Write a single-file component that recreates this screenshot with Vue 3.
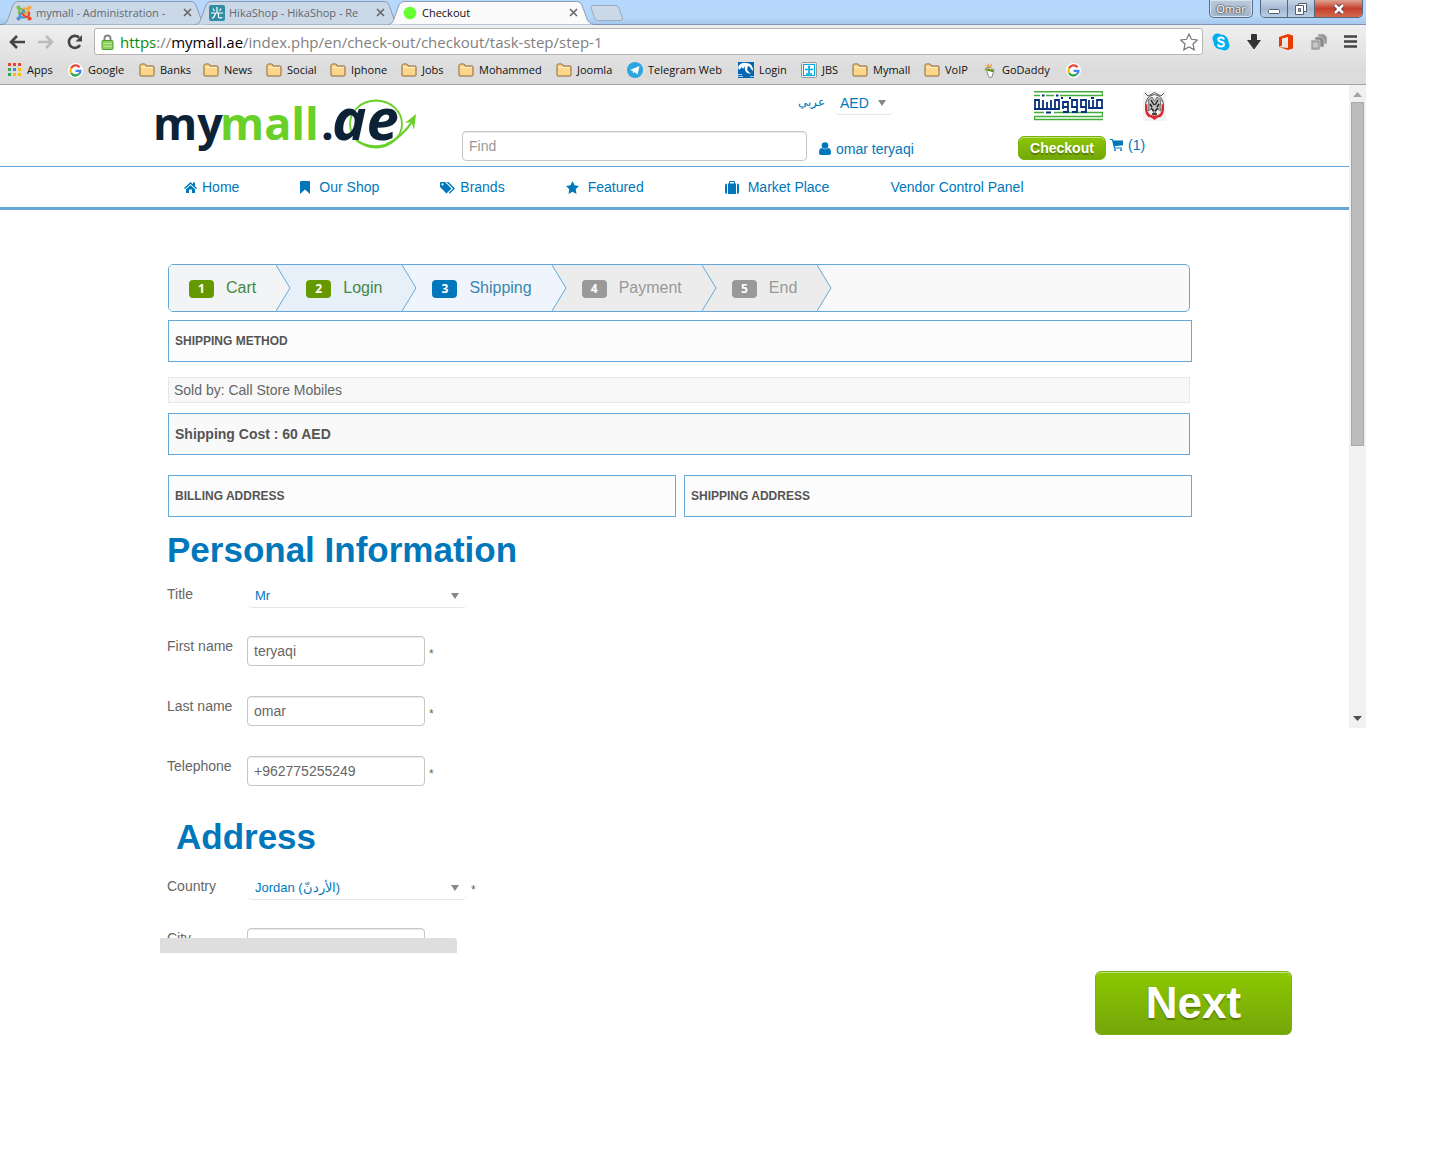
<template>
  <div class="screen">
    <header class="chrome">
      <div class="tab-strip">
        <div class="tabs">
          <button v-for="tab in tabs" :key="tab.title" type="button" class="tab" :class="{ active: tab.active }">
            <svg class="tab-shape" viewBox="0 0 206 25" preserveAspectRatio="none">
              <path d="M0 24.500C5 24 5 21 7 16L11 5Q12.500 1.500 16 1.500H189Q192.500 1.500 194 5L199 19Q201 24 206 24.500" />
            </svg>
            <svg v-if="tab.icon === 'joomla'" class="tab-icon" viewBox="0 0 16 16" fill="none" stroke-width="2.200" stroke-linecap="round">
              <path d="M3 8.500V6.500Q3 4 5.500 4L10 8.500" stroke="#7ac143" />
              <path d="M7.500 3.500H9.500Q12.500 4 12 6.500L8 10.500" stroke="#f9a541" />
              <path d="M13 7.500V9.500Q12 12.500 9.500 12L5.500 8" stroke="#f44321" />
              <path d="M8.500 12.500H6.500Q3 12 4 9.500L8 5.500" stroke="#5091cd" />
              <circle cx="2.500" cy="2.500" r="1.300" fill="#7ac143" stroke="#7ac143" stroke-width="1.500" />
              <circle cx="13.500" cy="2.500" r="1.300" fill="#f9a541" stroke="#f9a541" stroke-width="1.500" />
              <circle cx="13.500" cy="13.500" r="1.300" fill="#f44321" stroke="#f44321" stroke-width="1.500" />
              <circle cx="2.500" cy="13.500" r="1.300" fill="#5091cd" stroke="#5091cd" stroke-width="1.500" />
            </svg>
            <svg v-else-if="tab.icon === 'hika'" class="tab-icon" viewBox="0 0 16 16">
              <rect width="16" height="16" rx="2" fill="#2f8ea3" />
              <path d="M8 2V8M4 3.500L5.500 6M12 3.500L10.500 6M2 8H14M6.500 8Q6 12 3 13.500M9.500 8V12Q10 13.500 13.500 12.500" fill="none" stroke="#fff" stroke-width="1.200" />
            </svg>
            <svg v-else class="tab-icon" viewBox="0 0 16 16"><circle cx="8" cy="8" r="6.300" fill="#66ff33" /></svg>
            <span class="tab-title">{{ tab.title }}</span>
            <svg class="tab-close" viewBox="0 0 9 9"><path d="M1 1L8 8M8 1L1 8" /></svg>
          </button>
          <svg class="new-tab" viewBox="0 0 34 16">
            <path d="M3 .500H25Q28 .500 29 3L32.500 13Q33 15.500 30 15.500H8Q5.500 15.500 4.500 13L1 3Q.500 .500 3 .500Z" fill="#cbd8e7" stroke="#9aabbf" />
          </svg>
        </div>
        <div class="window-controls">
          <button type="button" class="profile">Omar</button>
          <div class="window-buttons">
            <button type="button" aria-label="Minimize">
              <svg width="14" height="12" viewBox="0 0 14 12"><rect x="1.500" y="6.500" width="11" height="4" rx="1" fill="#fff" stroke="#535e6e" /></svg>
            </button>
            <button type="button" aria-label="Restore">
              <svg width="14" height="14" viewBox="0 0 14 14" fill="#fff" stroke="#535e6e">
                <path d="M4.500 1.500H12.500V9.500H4.500Z" /><path d="M1.500 3.500H9.500V12.500H1.500Z" /><path d="M4.500 6.500H6.500V9.500H4.500Z" fill="#aebfd4" />
              </svg>
            </button>
            <button type="button" class="close" aria-label="Close">
              <svg width="14" height="12" viewBox="0 0 14 12">
                <path d="M3 2L11 10M11 2L3 10" stroke="#5a3236" stroke-width="4.500" /><path d="M3 2L11 10M11 2L3 10" stroke="#fff" stroke-width="2.600" />
              </svg>
            </button>
          </div>
        </div>
      </div>

      <div class="toolbar">
        <button type="button" class="tool" aria-label="Back">
          <svg width="16" height="14" viewBox="0 0 16 14" fill="none" stroke="#444" stroke-width="2.600"><path d="M8 1L2 7L8 13M2 7H16" /></svg>
        </button>
        <button type="button" class="tool" aria-label="Forward">
          <svg width="16" height="14" viewBox="0 0 16 14" fill="none" stroke="#bbb" stroke-width="2.600"><path d="M8 1L14 7L8 13M14 7H0" /></svg>
        </button>
        <button type="button" class="tool" aria-label="Reload">
          <svg width="16" height="16" viewBox="0 0 16 16"><path d="M13 11A6 6 0 1 1 12 3.500" fill="none" stroke="#444" stroke-width="2.600" /><path d="M15 1V7.500H8.500Z" fill="#444" /></svg>
        </button>
        <div class="address">
          <svg width="13" height="16" viewBox="0 0 13 16">
            <path d="M3.500 7V4.500A3 3 0 0 1 9.500 4.500V7" fill="none" stroke="#888" stroke-width="2" />
            <rect x="1" y="6.500" width="11" height="9" rx="1" fill="#8fd05e" stroke="#4c9a32" /><path d="M2 9.500H11M2 12.500H11" stroke="#b8e595" />
          </svg>
          <div class="url" role="textbox" aria-label="Address"><span class="scheme">https</span>://<span class="host">mymall.ae</span>/index.php/en/check-out/checkout/task-step/step-1</div>
          <svg width="18" height="18" viewBox="0 0 18 18"><path d="M9 1L11.400 6.300L17.300 7L13 11L14.200 16.800L9 14L3.800 16.800L5 11L.700 7L6.600 6.300Z" fill="#fff" stroke="#777" stroke-width="1.200" /></svg>
        </div>
        <div class="extensions">
          <svg width="18" height="18" viewBox="0 0 18 18">
            <circle cx="5.500" cy="5.500" r="5" fill="#00aff0" /><circle cx="12.500" cy="12.500" r="5" fill="#00aff0" /><circle cx="9" cy="9" r="7.500" fill="#00aff0" />
            <path d="M12 6.500Q11.500 4.500 9 4.500Q6.300 4.500 6.300 6.600Q6.300 8.200 9 8.800Q12 9.500 12 11.200Q12 13.500 9 13.500Q6.300 13.500 6 11.300" fill="none" stroke="#fff" stroke-width="1.900" />
          </svg>
          <svg width="16" height="17" viewBox="0 0 16 17"><path d="M5 2Q5 1 6 1H10Q11 1 11 2V7H15L8.500 16H7.500L1 7H5Z" fill="#333" /></svg>
          <svg width="16" height="18" viewBox="0 0 16 18"><path d="M1 4L10 1L15 2.500V15.500L10 17L1 14L10 15V4L4 5.500V12.500L1 14Z" fill="#eb3c00" /></svg>
          <svg width="18" height="18" viewBox="0 0 18 18" stroke="#ddd" stroke-width=".600">
            <path d="M8 1H14L17 4V11H8Z" fill="#999" /><path d="M5 4H11L14 7V14H5Z" fill="#888" /><rect x="1" y="7" width="9" height="10" rx="1" fill="#a0a0a0" /><path d="M3.500 10H7.500V14H3.500Z" fill="#c4c4c4" />
          </svg>
          <svg width="13" height="13" viewBox="0 0 13 13" stroke="#444" stroke-width="2.600"><path d="M0 1.500H13M0 6.500H13M0 11.500H13" /></svg>
        </div>
      </div>

      <nav class="bookmarks">
        <a v-for="mark in bookmarks" :key="mark.icon + mark.label" href="#">
          <svg v-if="mark.icon === 'apps'" width="14" height="14" viewBox="0 0 14 14">
            <path d="M0 0H3V3H0ZM5 0H8V3H5ZM10 0H13V3H10Z" fill="#ea4335" /><path d="M0 5H3V8H0ZM0 10H3V13H0Z" fill="#34a853" /><path d="M5 5H8V8H5Z" fill="#4285f4" /><path d="M10 5H13V8H10ZM5 10H8V13H5ZM10 10H13V13H10Z" fill="#fbbc05" />
          </svg>
          <svg v-else-if="mark.icon === 'google'" width="15" height="15" viewBox="0 0 14 14" fill="none" stroke-width="2.200">
            <circle cx="7" cy="7" r="7" fill="#fff" />
            <path d="M10.700 3.900A4.700 4.700 0 0 0 2.800 5" stroke="#ea4335" /><path d="M2.800 5A4.700 4.700 0 0 0 2.900 9.300" stroke="#fbbc05" /><path d="M2.900 9.300A4.700 4.700 0 0 0 10.300 10.300" stroke="#34a853" /><path d="M10.300 10.300Q11.600 9 11.600 7.300H7" stroke="#4285f4" />
          </svg>
          <svg v-else-if="mark.icon === 'telegram'" width="16" height="16" viewBox="0 0 16 16"><circle cx="8" cy="8" r="8" fill="#2ca5e0" /><path d="M3 8L12.500 4L10.500 12.500L7.500 10L6 11.500L5.800 9Z" fill="#fff" /></svg>
          <svg v-else-if="mark.icon === 'login'" width="16" height="16" viewBox="0 0 16 16"><rect width="16" height="16" fill="#0068b3" /><path d="M0 5Q3 0 8 1Q15 1 15 9L13 7Q12 4 10 4Q8 8 11 10L13 12L9 11Q6 8 7 4L5 7L4 5L1 8Z" fill="#fff" /><path d="M0 12.500H4M0 14.500H5M12 14.500H16" stroke="#9ccbed" /></svg>
          <svg v-else-if="mark.icon === 'jbs'" width="16" height="16" viewBox="0 0 16 16"><rect x=".500" y=".500" width="15" height="15" rx="1" fill="#eee" stroke="#999" /><rect x="2.500" y="2.500" width="11" height="11" fill="#fff" stroke="#00a9e0" /><path d="M8 6V12M4 7.500H12M5 12H11" stroke="#00a9e0" stroke-width="1.600" /><circle cx="8" cy="4.800" r="1.200" fill="#00a9e0" /></svg>
          <svg v-else-if="mark.icon === 'godaddy'" width="14" height="17" viewBox="0 0 14 17"><path d="M1 2L4 4L5 1L7 4L9 1V4L5 6Z" fill="#f5a04a" /><path d="M3 6Q8 4 11 8L9 15Q6 17 5 13Z" fill="#fff" stroke="#888" /><path d="M2 7L11 9" stroke="#8cae2b" stroke-width="2.500" /><circle cx="6" cy="8" r=".800" fill="#333" /><circle cx="9" cy="9" r=".800" fill="#333" /></svg>
          <svg v-else width="16" height="14" viewBox="0 0 16 14">
            <path d="M1 12V2.500Q1 1 2.500 1H5.500Q7 1 7 3H14Q15 3 15 4V12Q15 13 14 13H2Q1 13 1 12Z" fill="#fbd68b" stroke="#8f6533" /><path d="M2 4.500H14" stroke="#fff1cf" />
          </svg>
          <span>{{ mark.label }}</span>
        </a>
      </nav>
    </header>

    <div class="viewport">
      <div class="page">
        <header class="site-header">
          <svg class="logo" width="272" height="84" viewBox="-5 -24 272 84" role="img" aria-label="mymall.ae">
            <g font-family="'Open Sans', sans-serif" font-weight="700" font-size="45">
              <text x="-3" y="42" fill="#0c2236">my</text><text x="64" y="42" fill="#69d02a">mall</text><text x="165" y="42" fill="#0c2236">.</text>
            </g>
            <ellipse cx="220" cy="26" rx="26" ry="23.500" fill="none" stroke="#69d02a" stroke-width="1.800" />
            <path d="M200 42Q212 51 229 47Q247 39 257 22" fill="none" stroke="#69d02a" stroke-width="2.200" />
            <path d="M249 25L260 16L258 32L255.500 24Z" fill="#69d02a" />
            <text x="176" y="42" fill="#0c2236" font-family="'Open Sans', sans-serif" font-style="italic" font-weight="700" font-size="58">ae</text>
          </svg>
          <div class="header-middle">
            <div class="locale">
              <a href="#" lang="ar">عربي</a>
              <div class="select-wrap currency">
                <select aria-label="Currency"><option>AED</option></select>
              </div>
            </div>
            <div class="search-row">
              <input type="text" class="search" placeholder="Find" aria-label="Find">
              <a href="#" class="user">
                <svg width="12" height="13" viewBox="0 0 12 13" fill="currentColor"><circle cx="6" cy="3.500" r="3.300" /><path d="M0 11Q0 6 3 6Q6 8.500 9 6Q12 6 12 11Q12 13 10 13H2Q0 13 0 11Z" /></svg>
                omar teryaqi
              </a>
            </div>
          </div>
          <div class="header-right">
            <div class="sponsors">
              <svg width="69" height="30" viewBox="0 0 69 30" fill="none">
                <path d="M0 .800H69M0 4.500H6M12 4.500H20M26 4.500H69M0 21.500H10M20 21.500H69M0 25.500H69M0 28.500H69M.500 25V29M68.500 1V5M68.500 21V26" stroke="#41ad3b" stroke-width="1.400" />
                <path d="M0 18H26M1 18V9H5V18M9 9V18M13 11V18M17 9V18M21 18V9H25V18M29 18V11H34V21H29M29 16H34M38 21H43V9H38V16H43M47 21H52V9H47V16H52M55 9V18M55 17H69M59 9V17M63 17V9H68V17" stroke="#07317b" stroke-width="1.800" />
                <path d="M8 4.500H10.500M22 4.500H24.500M27 7H29M35 7H37M57 7H60M12 21.500H17" stroke="#07317b" stroke-width="2" />
              </svg>
              <svg width="23" height="30" viewBox="0 0 23 30">
                <rect width="23" height="30" fill="#f3f3f3" />
                <path d="M2 14Q1 26 8 26.500L11.500 29L15 26.500Q22 26 21 14L18.500 13V20Q17 24.500 11.500 24.500Q6 24.500 4.500 20V13Z" fill="#dd2932" />
                <path d="M2.500 14Q3 5 11.500 3.500Q20 5 20.500 14M2 2L5 5L9 3L11.500 1.500L14 3L18 5L21 2" fill="none" stroke="#555" />
                <path d="M5 9L9 6L11.500 10L14 6L18 9L17 16L18 20L14 18L11.500 24L9 18L5 20L6 15Z" fill="#bbb" stroke="#555" stroke-width=".800" />
                <path d="M8 9L11 14M15 9L12 14M8 17L11 20M15 17L12 20M7 13L9 16M16 13L14 16M9 23H14" stroke="#222" stroke-width="1.400" />
              </svg>
            </div>
            <div class="cart-row">
              <button type="button" class="green-button checkout">Checkout</button>
              <a href="#" class="cart">
                <svg width="13" height="12" viewBox="0 0 13 12" fill="currentColor"><path d="M0 0H2.800L3.300 1.500H13V6.300L4.700 7.300L5 8.500H12V9.500H4L2 1H0Z" /><circle cx="5" cy="11" r="1" /><circle cx="11" cy="11" r="1" /></svg>
                (1)
              </a>
            </div>
          </div>
        </header>

        <nav class="main-nav">
          <a v-for="item in menu" :key="item.label" href="#" :class="item.icon">
            <span v-if="item.slot" class="nav-icon" :style="{ width: item.slot + 'px' }">
              <svg :width="item.size" height="13" :viewBox="`0 0 ${item.size} 13`" fill="currentColor"><path :d="item.path" fill-rule="evenodd" /></svg>
            </span>{{ item.label }}
          </a>
        </nav>

        <main class="content">
          <ol class="steps">
            <li v-for="(step, i) in steps" :key="step.label" :class="step.state">
              <span class="badge">{{ i + 1 }}</span>
              <span>{{ step.label }}</span>
              <svg class="arrow" width="15" height="46" viewBox="0 0 15 46"><path d="M0 0L14 23L0 46" /></svg>
            </li>
          </ol>

          <h2 class="panel wide">SHIPPING METHOD</h2>
          <p class="vendor">Sold by: Call Store Mobiles</p>
          <p class="panel cost">Shipping Cost : 60 AED</p>
          <div class="addresses">
            <h2 class="panel">BILLING ADDRESS</h2>
            <h2 class="panel">SHIPPING ADDRESS</h2>
          </div>

          <form class="address-form" @submit.prevent>
            <h1>Personal Information</h1>
            <div class="row short">
              <label for="title">Title</label>
              <div class="select-wrap"><select id="title"><option>Mr</option></select></div>
            </div>
            <div v-for="field in fields" :key="field.id" class="row">
              <label :for="field.id">{{ field.label }}</label>
              <input :id="field.id" v-model="field.value" type="text">
              <span class="required">*</span>
            </div>
            <h1 class="indented">Address</h1>
            <div class="row short">
              <label for="country">Country</label>
              <div class="select-wrap"><select id="country"><option>Jordan (الأردنّ)</option></select></div>
              <span class="required">*</span>
            </div>
            <div class="row cut">
              <label for="city">City</label>
              <input id="city" type="text">
            </div>
          </form>
          <div class="status-bubble"></div>
        </main>
        <div class="actions">
          <button type="button" class="green-button next">Next</button>
        </div>
      </div>

      <div class="scrollbar">
        <svg width="9" height="5" viewBox="0 0 9 5"><path d="M0 5L4.500 0L9 5Z" fill="#a3a3a3" /></svg>
        <div class="thumb"></div>
        <svg width="9" height="5" viewBox="0 0 9 5"><path d="M0 0L4.500 5L9 0Z" fill="#505050" /></svg>
      </div>
    </div>
  </div>
</template>

<script setup>
import { ref } from 'vue'

const tabs = [
  { title: 'mymall - Administration - ', icon: 'joomla' },
  { title: 'HikaShop - HikaShop - Re', icon: 'hika' },
  { title: 'Checkout', icon: 'dot', active: true }
]

const bookmarks = [
  { label: 'Apps', icon: 'apps' },
  { label: 'Google', icon: 'google' },
  { label: 'Banks', icon: 'folder' },
  { label: 'News', icon: 'folder' },
  { label: 'Social', icon: 'folder' },
  { label: 'Iphone', icon: 'folder' },
  { label: 'Jobs', icon: 'folder' },
  { label: 'Mohammed', icon: 'folder' },
  { label: 'Joomla', icon: 'folder' },
  { label: 'Telegram Web', icon: 'telegram' },
  { label: 'Login', icon: 'login' },
  { label: 'JBS', icon: 'jbs' },
  { label: 'Mymall', icon: 'folder' },
  { label: 'VoIP', icon: 'folder' },
  { label: 'GoDaddy', icon: 'godaddy' },
  { label: '', icon: 'google' }
]

const menu = [
  { label: 'Home', icon: 'home', slot: 18, size: 13, path: 'M6.500 1L9 3.300V1.500H11V5.200L13 7L12 8L6.500 3L1 8L0 7ZM6.500 4.200L11 8.300V12H8V8.500H5V12H2V8.300Z' },
  { label: 'Our Shop', icon: 'bookmark', slot: 19, size: 10, path: 'M1 0H9Q10 0 10 1V13L5 8.500L0 13V1Q0 0 1 0Z' },
  { label: 'Brands', icon: 'tags', slot: 20, size: 15, path: 'M0 1.500Q0 1 1 1H5L11 7Q11.500 7.500 11 8L7 12Q6.500 12.500 6 12L0 6ZM2.500 2.300A1 1 0 1 0 2.500 4.500A1 1 0 1 0 2.500 2.300ZM6.500 1H8.500L14.500 7Q15 7.500 14.500 8L10 12.500L8.700 12L12.700 8Q13 7.500 12.500 7Z' },
  { label: 'Featured', icon: 'star', slot: 22, size: 13, path: 'M6.500 0L8.500 4.300L13 5L9.700 8.200L10.500 13L6.500 10.700L2.500 13L3.300 8.200L0 5L4.500 4.300Z' },
  { label: 'Market Place', icon: 'suitcase', slot: 23, size: 14, path: 'M4 2.500V1Q4 0 5 0H9Q10 0 10 1V2.500H11V13H3V2.500ZM5 1V2.500H9V1ZM2 2.500V13Q0 13 0 11V4.500Q0 2.500 2 2.500ZM12 2.500V13Q14 13 14 11V4.500Q14 2.500 12 2.500Z' },
  { label: 'Vendor Control Panel', icon: 'plain' }
]

const steps = [
  { label: 'Cart', state: 'done first' },
  { label: 'Login', state: 'done' },
  { label: 'Shipping', state: 'current' },
  { label: 'Payment', state: 'pending' },
  { label: 'End', state: 'pending' }
]

const fields = ref([
  { id: 'first-name', label: 'First name', value: 'teryaqi' },
  { id: 'last-name', label: 'Last name', value: 'omar' },
  { id: 'telephone', label: 'Telephone', value: '+962775255249' }
])
</script>

<style>
body {
  background: #fff;
}
</style>

<style scoped>
.screen {
  min-height: 100vh;
  padding-right: 86px;
  box-sizing: border-box;
  color: #666;
  font: 14px/20px "Liberation Sans", Arial, sans-serif;
}

.screen * {
  box-sizing: border-box;
}

a {
  color: #0077bb;
  text-decoration: none;
}

button,
input,
select {
  font: inherit;
  margin: 0;
}

svg {
  flex: none;
}

/* browser frame */
.chrome {
  font: 12px/16px "Open Sans", "Noto Sans", sans-serif;
  color: #111;
  background: linear-gradient(#fafafa, #dcdcdc 70px);
  border-bottom: 1px solid #a5a5a5;
}

.tab-strip {
  display: flex;
  justify-content: space-between;
  height: 25px;
  background: linear-gradient(#b7d8fd, #b5d8fb 16px, #a5c8ec);
  border-bottom: 1px solid #7d95b3;
}

.tabs {
  display: flex;
  height: 25px;
  padding-left: 2px;
}

.tab {
  position: relative;
  display: flex;
  align-items: center;
  width: 206px;
  height: 25px;
  margin-right: -13px;
  padding: 0 16px 0 14px;
  border: 0;
  background: none;
  color: #63686f;
  font-size: 11px;
}

.tab.active {
  z-index: 1;
  color: #111;
}

.tab-shape {
  position: absolute;
  inset: 0;
  width: 100%;
  height: 100%;
  fill: #cbd8e7;
  stroke: #8b9db5;
}

.active .tab-shape {
  fill: #fafafa;
}

.tab-icon {
  position: relative;
  width: 16px;
  height: 16px;
}

.tab-title {
  position: relative;
  flex: 1;
  margin: 0 8px 0 4px;
  overflow: hidden;
  white-space: pre;
  text-align: left;
}

.tab-close {
  position: relative;
  width: 9px;
  height: 9px;
  stroke: #666;
  stroke-width: 1.600;
}

.new-tab {
  width: 34px;
  height: 16px;
  margin: 5px 0 0 9px;
}

.window-controls {
  display: flex;
  gap: 7px;
  padding-right: 3px;
}

.profile {
  width: 44px;
  height: 18px;
  padding: 0;
  border: 1px solid #5b6c80;
  border-top: 0;
  border-radius: 0 0 5px 5px;
  background: linear-gradient(#bccbdc, #9fb4ca);
  box-shadow: inset 0 0 0 1px #d5e2f0;
  color: #fff;
  font-size: 11px;
  line-height: 16px;
  text-shadow: 0 0 2px #333, 0 0 2px #333;
}

.window-buttons {
  display: flex;
  height: 18px;
  border: 1px solid #55677d;
  border-top: 0;
  border-radius: 0 0 5px 5px;
  overflow: hidden;
}

.window-buttons button {
  display: flex;
  align-items: center;
  justify-content: center;
  width: 27px;
  padding: 0;
  border: 0;
  border-right: 1px solid #55677d;
  background: linear-gradient(#c6d6e8, #a4b9d0 50%, #b8cde4);
}

.window-buttons .close {
  width: 47px;
  border: 0;
  background: linear-gradient(#e0a293, #c6402c 50%, #d16a50);
}

.toolbar {
  display: flex;
  align-items: center;
  height: 33px;
  padding: 3px 9px;
}

.tool {
  display: flex;
  align-items: center;
  width: 29px;
  height: 24px;
  padding: 0;
  border: 0;
  background: none;
}

.address {
  display: flex;
  flex: 1;
  align-items: center;
  gap: 6px;
  height: 27px;
  margin-left: -2px;
  padding: 0 4px 0 6px;
  border: 1px solid #b5b5b5;
  border-radius: 3px;
  background: #fff;
}

.url {
  flex: 1;
  color: #808080;
  font-size: 15px;
  line-height: 24px;
}

.scheme {
  color: #0b8a0b;
}

.host {
  color: #000;
}

.extensions {
  display: flex;
  align-items: center;
  gap: 16px;
  padding: 0 0 0 9px;
}

.bookmarks {
  display: grid;
  grid-template-columns: 60px 71px 64px 63px 64px 71px 57px 98px 71px 111px 63px 51px 72px 59px 83px 20px;
  align-items: center;
  height: 26px;
  padding: 0 0 2px 8px;
  font-size: 11px;
}

.bookmarks a {
  display: flex;
  align-items: center;
  gap: 5px;
  color: #111;
  white-space: nowrap;
}

/* page and its scrollbar */
.viewport {
  display: flex;
  align-items: flex-start;
}

.page {
  flex: 1;
  min-width: 0;
}

.scrollbar {
  display: flex;
  flex-direction: column;
  align-items: center;
  width: 17px;
  height: 643px;
  padding: 7px 0;
  background: #f1f1f1;
}

.thumb {
  width: 13px;
  height: 344px;
  margin: 5px 0 auto;
  border: 1px solid #a8a8a8;
  background: #bcbcbc;
}

.site-header {
  display: grid;
  grid-template-columns: 307px 556px 1fr;
  height: 82px;
  padding: 6px 0 0 155px;
  border-bottom: 1px solid #64a8d8;
}

.logo {
  margin: -17px 0 0 -4px;
}

.locale {
  display: flex;
  gap: 10px;
  height: 24px;
  margin-left: 336px;
}

.locale a {
  width: 26px;
  font-size: 12px;
  line-height: 22px;
}

.select-wrap {
  position: relative;
  width: 220px;
  height: 24px;
}

.select-wrap::after {
  content: "";
  position: absolute;
  top: 9px;
  right: 8px;
  border: 4px solid transparent;
  border-top: 6px solid #888;
  border-bottom: 0;
  pointer-events: none;
}

.select-wrap select {
  width: 100%;
  height: 100%;
  padding: 0 8px;
  border: 0;
  border-bottom: 1px solid #e6e6e6;
  border-radius: 5px;
  background: #fff;
  color: #0077bb;
  font-size: 13px;
  appearance: none;
}

.select-wrap.currency {
  width: 60px;
}

.select-wrap.currency select {
  padding: 0 6px;
  font-size: 14px;
}

.search-row {
  display: flex;
  align-items: center;
  margin-top: 16px;
}

input {
  width: 178px;
  height: 30px;
  padding: 4px 6px;
  border: 1px solid #c6c6c6;
  border-radius: 4px;
  background: #fff;
  box-shadow: inset 0 1px 1px rgb(0 0 0 / 0.08);
  color: #666;
}

input.search {
  width: 345px;
}

.search::placeholder {
  color: #999;
}

.user {
  display: flex;
  gap: 5px;
  align-items: center;
  margin-left: 12px;
  padding-top: 5px;
}

.sponsors {
  display: flex;
  gap: 40px;
  padding-left: 16px;
}

.cart-row {
  display: flex;
  gap: 4px;
  margin-top: 15px;
}

.green-button {
  border: 1px solid #72b510;
  border-radius: 6px;
  background: linear-gradient(#8cc800, #75a60a);
  box-shadow: inset 0 1px 0 rgb(255 255 255 / 0.5);
  color: #fff;
  font-weight: 700;
  text-shadow: 0 2px 1px rgb(0 0 0 / 0.3);
}

.checkout {
  width: 88px;
  height: 24px;
  padding: 0;
}

.cart {
  display: flex;
  align-items: center;
  gap: 5px;
  height: 18px;
}

.main-nav {
  display: flex;
  align-items: center;
  gap: 61px;
  height: 43px;
  padding-left: 184px;
  border-bottom: 3px solid #64a8d8;
}

.main-nav a {
  display: flex;
  align-items: center;
  white-space: nowrap;
}

.main-nav .star {
  padding-right: 20px;
}

.nav-icon {
  display: flex;
}

/* checkout */
.content {
  margin: 54px 159px 0 168px;
}

.steps {
  display: flex;
  height: 48px;
  margin: 0 0 8px;
  padding: 0;
  border: 1px solid #64a8d8;
  border-radius: 5px;
  background: #f9f9f9;
  list-style: none;
  font-size: 16px;
}

.steps li {
  position: relative;
  display: flex;
  align-items: center;
  gap: 12px;
  padding: 0 20px 0 30px;
  background: #ececec;
  color: #999;
}

.steps .first {
  padding-left: 20px;
  border-radius: 4px 0 0 4px;
}

.steps .done {
  background: #e7eff8;
  color: #468847;
}

.steps .done.first {
  background: #f3f4f5;
}

.steps .current {
  background: #f0f5fd;
  color: #3a87ad;
}

.badge {
  width: 25px;
  height: 18px;
  margin-top: 2px;
  border-radius: 4px;
  background: #999;
  color: #fff;
  font: 700 12px/18px "Open Sans", sans-serif;
  text-align: center;
}

.done .badge {
  background: #669900;
}

.current .badge {
  background: #0077bb;
}

.arrow {
  position: absolute;
  z-index: 1;
  top: 0;
  left: 100%;
  fill: #ececec;
  stroke: #64a8d8;
}

.done .arrow {
  fill: #e7eff8;
}

.done.first .arrow {
  fill: #f3f4f5;
}

.current .arrow {
  fill: #f0f5fd;
}

.panel {
  height: 42px;
  margin: 0;
  padding: 0 6px;
  border: 1px solid #64a8d8;
  background: #fcfcfc;
  color: #555;
  font-size: 12px;
  font-weight: 700;
  line-height: 40px;
}

.wide,
.addresses {
  margin-right: -2px;
}

.vendor {
  height: 26px;
  margin: 15px 0 10px;
  padding: 0 5px;
  border: 1px solid #e8e8e8;
  background: #f8f8f8;
  line-height: 24px;
}

.cost {
  background: #f9f9f9;
  font-size: 14px;
}

.addresses {
  display: grid;
  grid-template-columns: 1fr 1fr;
  gap: 8px;
  margin-top: 20px;
}

h1 {
  margin: 0;
  color: #0077bb;
  font-size: 35px;
  line-height: 42px;
}

.address-form {
  margin-left: -1px;
  padding-top: 12px;
}

.indented {
  padding-left: 9px;
}

.row {
  display: grid;
  grid-template-columns: 80px auto 1fr;
  align-items: start;
  height: 60px;
}

.row.short {
  height: 52px;
  margin-top: 13px;
}

.indented + .row.short {
  margin-top: 18px;
}

.required {
  padding: 8px 0 0 4px;
  font-size: 12px;
}

.short .required {
  padding-top: 4px;
}

.row.cut {
  height: 10px;
  overflow: hidden;
}

.status-bubble {
  width: 297px;
  height: 15px;
  margin-left: -8px;
  border-radius: 0 3px 0 0;
  background: #dedede;
}

.actions {
  display: flex;
  justify-content: flex-end;
  padding: 18px 57px 0 0;
}

.next {
  width: 197px;
  height: 64px;
  padding: 0;
  font-size: 44px;
  line-height: 62px;
}
</style>
